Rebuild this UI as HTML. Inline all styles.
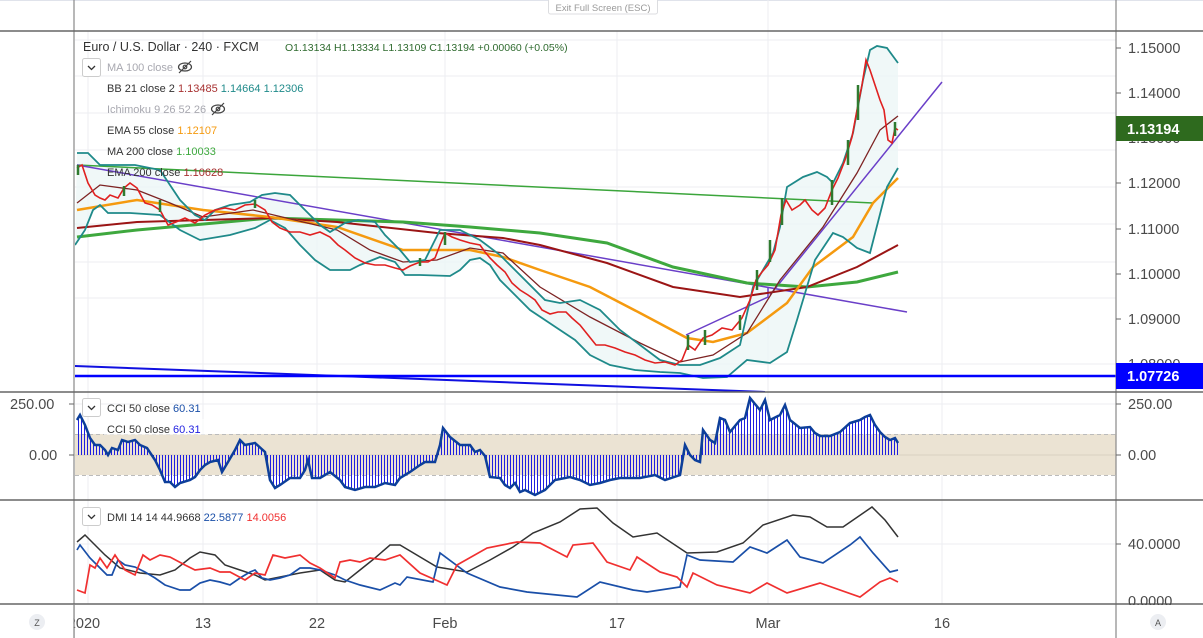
<!DOCTYPE html>
<html><head><meta charset="utf-8"><style>
html,body{margin:0;padding:0;background:#fff;width:1203px;height:638px;overflow:hidden;font-family:"Liberation Sans",sans-serif}
svg text{font-family:"Liberation Sans",sans-serif}
</style></head><body>
<svg width="1203" height="638" viewBox="0 0 1203 638" xmlns="http://www.w3.org/2000/svg">
<defs>
<pattern id="vl" width="3" height="10" patternUnits="userSpaceOnUse"><rect x="0" y="0" width="1" height="10" fill="#1f1fe0"/></pattern>
<clipPath id="mc"><rect x="75" y="32" width="1041" height="360"/></clipPath>
</defs>
<rect x="0" y="0" width="1203" height="1" fill="#e0e3eb"/>
<g stroke="#eceef2" stroke-width="1">
<line x1="88" y1="31" x2="88" y2="604"/><line x1="203" y1="31" x2="203" y2="604"/><line x1="317" y1="31" x2="317" y2="604"/><line x1="445" y1="31" x2="445" y2="604"/><line x1="617" y1="31" x2="617" y2="604"/><line x1="768" y1="0" x2="768" y2="604"/><line x1="942" y1="31" x2="942" y2="604"/>
<line x1="75" y1="40" x2="1116" y2="40"/><line x1="75" y1="76" x2="1116" y2="76"/><line x1="75" y1="113" x2="1116" y2="113"/><line x1="75" y1="150" x2="1116" y2="150"/><line x1="75" y1="187" x2="1116" y2="187"/><line x1="75" y1="224" x2="1116" y2="224"/><line x1="75" y1="262" x2="1116" y2="262"/><line x1="75" y1="298" x2="1116" y2="298"/><line x1="75" y1="364" x2="1116" y2="364"/>
<line x1="75" y1="404" x2="1116" y2="404"/><line x1="75" y1="544" x2="1116" y2="544"/>
</g>
<rect x="548.5" y="-2" width="109" height="16" rx="2" fill="#fff" stroke="#dcdde0"/>
<text x="603" y="11" font-size="9.5" fill="#9a9a9a" text-anchor="middle">Exit Full Screen (ESC)</text>

<g clip-path="url(#mc)">
<path d="M77,153 L88,153 L100,165 L135,165 L160,170 L180,200 L195,215 L205,220 L215,210 L230,205 L250,202 L262,195 L275,193 L290,195 L305,210 L320,225 L330,232 L345,223 L358,220 L375,222 L385,235 L400,250 L410,262 L425,260 L440,230 L460,230 L480,240 L500,255 L520,275 L545,300 L560,303 L580,300 L600,310 L620,330 L640,345 L660,360 L680,365 L700,365 L720,358 L740,345 L753,287 L773,253 L780,227 L787,187 L803,177 L817,172 L827,177 L833,183 L843,163 L853,133 L863,80 L870,50 L877,46 L887,48 L898,63 L898,168 L887,187 L870,253 L857,248 L843,237 L833,233 L815,260 L797,320 L787,352 L770,363 L747,360 L727,377 L703,378 L680,373 L660,372 L635,370 L610,365 L590,355 L575,340 L560,330 L545,320 L530,310 L520,300 L510,290 L500,280 L490,265 L480,258 L470,260 L460,270 L450,276 L420,275 L405,275 L395,262 L380,257 L360,265 L350,270 L330,270 L315,260 L300,245 L285,228 L270,220 L255,228 L230,235 L200,240 L180,230 L160,215 L130,213 L108,213 L100,205 L93,210 L85,230 L75,245 Z" fill="#ecf6f6" opacity="0.8"/>
<line x1="77" y1="165" x2="873" y2="203" stroke="#3ba53b" stroke-width="1.5"/>
<line x1="77" y1="165" x2="907" y2="312" stroke="#6a3fc8" stroke-width="1.5"/>
<polyline points="686,335 768,297 768,287" fill="none" stroke="#6a3fc8" stroke-width="1.5"/>
<line x1="770" y1="295" x2="942" y2="82" stroke="#6a3fc8" stroke-width="1.5"/>
<polyline points="77,237 137,230 270,218 403,222 470,227 540,233 607,243 673,267 747,283 807,287 857,282 898,272" fill="none" stroke="#3ea83e" stroke-width="3"/>
<polyline points="77,228 137,222 270,218 337,222 437,233 503,238 540,245 607,263 673,287 740,297 807,287 857,267 898,245" fill="none" stroke="#9b1515" stroke-width="2"/>
<polyline points="77,210 137,200 170,205 203,210 270,217 337,227 403,250 437,250 470,250 503,257 540,270 590,287 640,313 687,338 713,342 747,333 787,303 813,267 853,237 873,203 898,178" fill="none" stroke="#f59a0f" stroke-width="2.5"/>
<polyline points="77,203 100,185 137,190 170,203 203,217 253,210 303,222 337,230 370,250 403,262 437,260 470,248 503,253 540,287 590,317 640,343 680,362 713,355 747,333 780,280 823,227 857,173 880,130 898,116" fill="none" stroke="#7d2323" stroke-width="1.3"/>
<polyline points="77,153 88,153 100,165 135,165 160,170 180,200 195,215 205,220 215,210 230,205 250,202 262,195 275,193 290,195 305,210 320,225 330,232 345,223 358,220 375,222 385,235 400,250 410,262 425,260 440,230 460,230 480,240 500,255 520,275 545,300 560,303 580,300 600,310 620,330 640,345 660,360 680,365 700,365 720,358 740,345 753,287 773,253 780,227 787,187 803,177 817,172 827,177 833,183 843,163 853,133 863,80 870,50 877,46 887,48 898,63" fill="none" stroke="#1f8a8a" stroke-width="1.8"/>
<polyline points="75,245 85,230 93,210 100,205 108,213 130,213 160,215 180,230 200,240 230,235 255,228 270,220 285,228 300,245 315,260 330,270 350,270 360,265 380,257 395,262 405,275 420,275 450,276 460,270 470,260 480,258 490,265 500,280 510,290 520,300 530,310 545,320 560,330 575,340 590,355 610,365 635,370 660,372 680,373 703,378 727,377 747,360 770,363 787,352 797,320 815,260 833,233 843,237 857,248 870,253 887,187 898,168" fill="none" stroke="#1f8a8a" stroke-width="1.8"/>
<polyline points="77,168 82,165 88,183 95,195 100,198 105,200 110,195 118,198 124,188 130,183 137,188 145,203 152,205 160,210 168,225 176,222 185,218 195,223 205,215 215,210 225,208 235,210 245,205 255,204 265,210 272,222 280,228 290,232 300,232 310,235 320,232 330,237 338,245 345,250 355,258 365,263 375,265 385,265 395,268 403,270 410,266 420,262 428,262 435,258 440,245 445,233 452,237 460,240 470,243 480,245 485,252 490,258 497,265 505,272 512,283 520,290 528,295 535,300 542,310 550,314 558,312 566,312 572,318 580,325 588,335 596,345 605,345 615,348 625,352 635,355 645,360 655,363 665,362 675,365 682,360 688,345 695,350 703,338 712,335 722,328 732,330 742,318 750,300 756,280 762,272 768,265 775,250 781,215 786,200 792,210 800,205 805,200 812,210 818,215 825,208 832,190 838,178 845,160 852,137 857,110 862,85 866,60 870,70 875,85 880,100 884,110 888,140 892,143 895,128 898,130" fill="none" stroke="#e02020" stroke-width="1.6"/>
<g stroke="#2f7a2f" stroke-width="2.5">
<line x1="78" y1="165" x2="78" y2="175"/><line x1="124" y1="186" x2="124" y2="196"/><line x1="160" y1="200" x2="160" y2="212"/><line x1="255" y1="200" x2="255" y2="208"/><line x1="420" y1="258" x2="420" y2="266"/><line x1="445" y1="232" x2="445" y2="245"/><line x1="688" y1="335" x2="688" y2="350"/><line x1="705" y1="330" x2="705" y2="345"/><line x1="740" y1="315" x2="740" y2="330"/><line x1="757" y1="270" x2="757" y2="290"/><line x1="770" y1="240" x2="770" y2="262"/><line x1="782" y1="198" x2="782" y2="225"/><line x1="832" y1="180" x2="832" y2="205"/><line x1="848" y1="140" x2="848" y2="165"/><line x1="858" y1="85" x2="858" y2="120"/><line x1="895" y1="122" x2="895" y2="136"/>
</g>
<line x1="74" y1="366" x2="765" y2="392" stroke="#1010e0" stroke-width="2"/>
<line x1="74" y1="376" x2="1116" y2="376" stroke="#0000ff" stroke-width="2.5"/>
</g>

<rect x="75" y="434" width="1041" height="41" fill="#ebe3d3"/>
<line x1="75" y1="434.5" x2="1116" y2="434.5" stroke="#bbb" stroke-dasharray="4,3"/>
<line x1="75" y1="475.5" x2="1116" y2="475.5" stroke="#bbb" stroke-dasharray="4,3"/>
<line x1="75" y1="455" x2="1116" y2="455" stroke="#d8d0c0"/>
<path d="M77,455 L77,420 80,415 85,425 90,438 95,445 100,445 105,450 108,455 112,448 118,450 122,440 128,442 135,440 140,445 147,448 155,460 160,470 165,482 170,482 175,487 180,483 190,480 195,477 200,470 205,465 210,462 218,460 222,472 228,462 235,450 240,440 245,445 255,443 265,452 270,480 275,488 280,485 290,478 300,478 305,470 308,460 312,478 320,478 330,472 340,480 345,487 355,490 365,487 375,487 385,483 395,485 400,478 410,472 420,465 425,462 435,462 440,445 443,428 450,437 460,445 470,445 475,452 480,450 485,456 490,477 500,478 505,485 510,488 515,483 520,492 525,490 535,495 545,490 555,480 570,477 580,480 590,485 600,483 610,480 620,478 640,478 655,475 665,480 680,475 685,445 690,455 695,460 700,462 703,430 710,440 715,443 720,418 725,420 730,432 740,420 745,418 750,398 755,404 760,410 765,400 770,420 780,415 785,405 790,420 800,428 810,427 815,433 820,436 830,436 840,432 850,423 860,420 865,417 870,415 875,425 880,432 885,437 890,440 895,438 898,443 L898,455 Z" fill="url(#vl)"/>
<polyline points="77,420 80,415 85,425 90,438 95,445 100,445 105,450 108,455 112,448 118,450 122,440 128,442 135,440 140,445 147,448 155,460 160,470 165,482 170,482 175,487 180,483 190,480 195,477 200,470 205,465 210,462 218,460 222,472 228,462 235,450 240,440 245,445 255,443 265,452 270,480 275,488 280,485 290,478 300,478 305,470 308,460 312,478 320,478 330,472 340,480 345,487 355,490 365,487 375,487 385,483 395,485 400,478 410,472 420,465 425,462 435,462 440,445 443,428 450,437 460,445 470,445 475,452 480,450 485,456 490,477 500,478 505,485 510,488 515,483 520,492 525,490 535,495 545,490 555,480 570,477 580,480 590,485 600,483 610,480 620,478 640,478 655,475 665,480 680,475 685,445 690,455 695,460 700,462 703,430 710,440 715,443 720,418 725,420 730,432 740,420 745,418 750,398 755,404 760,410 765,400 770,420 780,415 785,405 790,420 800,428 810,427 815,433 820,436 830,436 840,432 850,423 860,420 865,417 870,415 875,425 880,432 885,437 890,440 895,438 898,443" fill="none" stroke="#0d3f9a" stroke-width="2.5"/>

<polyline points="77,542 85,535 95,545 105,555 120,568 140,573 160,575 175,570 190,558 200,552 215,555 225,565 240,570 255,575 265,580 280,577 300,573 320,570 335,580 345,582 360,570 375,558 390,545 400,545 437,567 467,572 490,560 513,547 533,533 560,522 580,509 597,508 613,523 633,537 657,533 687,553 717,552 743,543 763,525 793,515 810,517 827,527 843,527 872,507 885,520 898,537" fill="none" stroke="#333" stroke-width="1.5"/>
<polyline points="77,550 80,545 90,558 100,568 107,575 112,575 118,560 125,565 135,567 145,572 155,578 165,585 180,590 190,590 200,583 210,580 220,582 230,585 240,578 250,572 255,570 262,578 270,580 280,578 290,575 300,568 310,568 320,570 335,575 345,580 360,585 380,590 395,583 400,585 407,577 433,582 440,553 467,573 500,587 527,592 577,597 600,582 633,590 647,592 680,587 687,555 700,560 733,562 750,547 767,553 787,540 800,557 823,563 850,545 860,537 873,553 890,572 898,570" fill="none" stroke="#1a4fa8" stroke-width="1.7"/>
<polyline points="77,590 85,593 90,565 95,568 100,558 107,568 115,555 125,570 135,575 143,555 150,560 160,555 170,557 185,565 195,570 210,568 220,572 230,572 245,580 255,573 265,575 273,555 285,558 300,555 310,563 320,568 335,578 340,562 350,560 360,562 370,558 385,560 400,555 420,573 447,585 457,565 487,548 517,542 540,543 567,557 573,545 593,543 607,562 630,570 637,557 660,572 677,577 687,587 693,573 717,585 750,593 767,583 787,593 820,583 860,597 880,582 890,578 898,582" fill="none" stroke="#f03030" stroke-width="1.7"/>

<g stroke="#888" stroke-width="1.2">
<line x1="74" y1="0" x2="74" y2="638"/><line x1="1116" y1="0" x2="1116" y2="638"/>
</g>
<g stroke="#666" stroke-width="1.5">
<line x1="0" y1="31" x2="1203" y2="31"/><line x1="0" y1="392" x2="1203" y2="392"/><line x1="0" y1="500" x2="1203" y2="500"/><line x1="0" y1="604" x2="1203" y2="604"/>
</g>

<g font-size="11" xml:space="preserve">
<text x="83" y="51" fill="#333" font-size="12.5">Euro / U.S. Dollar · 240 · FXCM</text>
<text x="285" y="51" fill="#2f6b2f" font-size="10.5">O1.13134  H1.13334  L1.13109  C1.13194  +0.00060 (+0.05%)</text>
<rect x="82.5" y="58.5" width="18" height="18" rx="2" fill="#fff" stroke="#ccc"/>
<path d="M88,66 L91.5,69.5 L95,66" fill="none" stroke="#333" stroke-width="1.3"/>
<text x="107" y="71" fill="#a8a8b0">MA 100 close</text>
<g fill="none" stroke="#444" stroke-width="1.2"><ellipse cx="185" cy="67" rx="6.5" ry="4"/><circle cx="185" cy="67" r="1.8"/><line x1="179" y1="73" x2="191" y2="61"/></g>
<text x="107" y="92" fill="#333">BB 21 close 2  <tspan fill="#a83232">1.13485</tspan>  <tspan fill="#1f8a8a">1.14664  1.12306</tspan></text>
<text x="107" y="113" fill="#a8a8b0">Ichimoku 9 26 52 26</text>
<g fill="none" stroke="#444" stroke-width="1.2"><ellipse cx="218" cy="109" rx="6.5" ry="4"/><circle cx="218" cy="109" r="1.8"/><line x1="212" y1="115" x2="224" y2="103"/></g>
<text x="107" y="134" fill="#333">EMA 55 close  <tspan fill="#f59a0f">1.12107</tspan></text>
<text x="107" y="155" fill="#333">MA 200 close  <tspan fill="#3ea83e">1.10033</tspan></text>
<text x="107" y="176" fill="#333">EMA 200 close  <tspan fill="#a83232">1.10628</tspan></text>
<rect x="82.5" y="398.5" width="18" height="18" rx="2" fill="#fff" stroke="#ccc"/>
<path d="M88,406 L91.5,409.5 L95,406" fill="none" stroke="#333" stroke-width="1.3"/>
<text x="107" y="412" fill="#333">CCI 50 close  <tspan fill="#1a4fa8">60.31</tspan></text>
<rect x="104" y="419" width="104" height="16" fill="#fff" opacity="0.6"/>
<text x="107" y="433" fill="#333">CCI 50 close  <tspan fill="#1f1fe0">60.31</tspan></text>
<rect x="82.5" y="507.5" width="18" height="18" rx="2" fill="#fff" stroke="#ccc"/>
<path d="M88,515 L91.5,518.5 L95,515" fill="none" stroke="#333" stroke-width="1.3"/>
<text x="107" y="521" fill="#333">DMI 14 14   44.9668  <tspan fill="#1a4fa8">22.5877</tspan>  <tspan fill="#f03030">14.0056</tspan></text>
</g>

<g font-size="14.5" fill="#4a4a4a">
<g stroke="#666"><line x1="1116" y1="48" x2="1121" y2="48"/><line x1="1116" y1="93" x2="1121" y2="93"/><line x1="1116" y1="183" x2="1121" y2="183"/><line x1="1116" y1="229" x2="1121" y2="229"/><line x1="1116" y1="274" x2="1121" y2="274"/><line x1="1116" y1="319" x2="1121" y2="319"/><line x1="1116" y1="404" x2="1121" y2="404"/><line x1="1116" y1="455" x2="1121" y2="455"/><line x1="1116" y1="544" x2="1121" y2="544"/></g>
<text x="1128" y="53">1.15000</text><text x="1128" y="98">1.14000</text><text x="1128" y="143">1.13000</text><text x="1128" y="188">1.12000</text><text x="1128" y="234">1.11000</text><text x="1128" y="279">1.10000</text><text x="1128" y="324">1.09000</text><text x="1128" y="369">1.08000</text>
<text x="1128" y="409">250.00</text><text x="1128" y="460">0.00</text><text x="1128" y="549">40.0000</text><text x="1128" y="606">0.0000</text>
</g>
<rect x="1116" y="116" width="87" height="25" fill="#2e6a1e"/>
<text x="1127" y="134" font-size="14.5" font-weight="bold" fill="#fff">1.13194</text>
<rect x="1116" y="363" width="87" height="26" fill="#0000ff"/>
<text x="1127" y="381" font-size="14.5" font-weight="bold" fill="#fff">1.07726</text>
<rect x="1117" y="605" width="86" height="33" fill="#fff"/>
<g font-size="14.5" fill="#4a4a4a"><text x="10" y="409">250.00</text><text x="29" y="460">0.00</text></g>
<g stroke="#666"><line x1="69" y1="404" x2="74" y2="404"/><line x1="69" y1="455" x2="74" y2="455"/></g>
<g font-size="14.5" fill="#4a4a4a" text-anchor="middle">
<text x="84" y="628">2020</text><text x="203" y="628">13</text><text x="317" y="628">22</text><text x="445" y="628">Feb</text><text x="617" y="628">17</text><text x="768" y="628">Mar</text><text x="942" y="628">16</text>
</g>
<rect x="0" y="605" width="73.4" height="33" fill="#fff"/>
<line x1="74" y1="604" x2="74" y2="638" stroke="#888" stroke-width="1.2"/>
<circle cx="37" cy="622" r="8" fill="#eceef2"/><text x="37" y="626" font-size="9" fill="#555" text-anchor="middle">Z</text>
<circle cx="1158" cy="622" r="8" fill="#eceef2"/><text x="1158" y="626" font-size="9" fill="#555" text-anchor="middle">A</text>
</svg>
</body></html>
